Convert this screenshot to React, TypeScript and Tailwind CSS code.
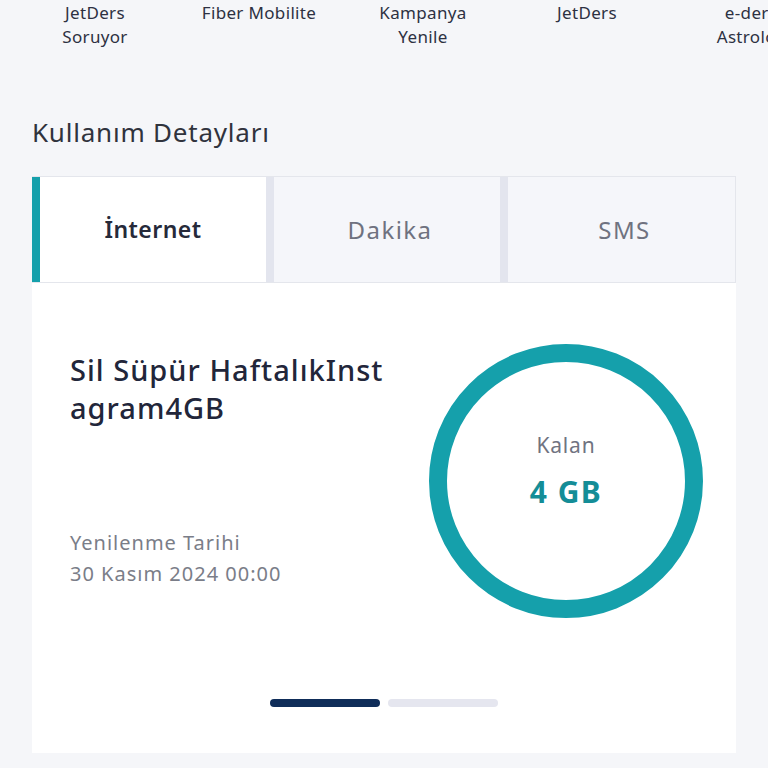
import React from "react";

const shortcuts = [
  ["JetDers", "Soruyor"],
  ["Fiber Mobilite"],
  ["Kampanya", "Yenile"],
  ["JetDers"],
  ["e-ders", "Astroloji"],
];

function Ring() {
  return (
    <div className="relative w-[276px] h-[276px]">
      <svg width="276" height="276" viewBox="0 0 276 276" className="absolute inset-0">
        <circle cx="138" cy="138" r="128" fill="none" stroke="#15a0ab" strokeWidth="18" />
      </svg>
      <div className="absolute inset-0 flex flex-col items-center justify-center pb-[22px]">
        <span className="text-[21px] leading-[24px] tracking-[0.04em] text-[#707381]">Kalan</span>
        <span className="mt-[20px] text-[30px] leading-[30px] font-bold tracking-[0.05em] text-[#148d97]">4 GB</span>
      </div>
    </div>
  );
}

export default function App() {
  return (
    <div
      className="w-[768px] h-[768px] overflow-hidden bg-[#f5f6f9] text-[#262a3a]"
      style={{ fontFamily: '"Noto Sans", "Open Sans", sans-serif' }}
    >
      {/* shortcut labels */}
      <div className="flex pl-[13px] pt-[1px] whitespace-nowrap">
        {shortcuts.map((s, i) => (
          <div
            key={i}
            className="w-[164px] shrink-0 flex flex-col items-center text-[17px] leading-[24px] tracking-[0.02em] text-[#2d3142]"
          >
            {s.map((l) => (
              <span key={l}>{l}</span>
            ))}
          </div>
        ))}
      </div>

      <h2 className="mt-[67px] ml-[32px] text-[26px] leading-[32px] tracking-[0.03em] text-[#30333d]">
        Kullanım Detayları
      </h2>

      <div className="mx-[32px] mt-[28px]">
        {/* tabs */}
        <div className="flex h-[107px] border-t border-b border-r border-[#e4e6ec] bg-[#e3e5ee]">
          <div className="w-[8px] bg-[#15a0ab]" />
          <div className="w-[226px] bg-white flex items-center justify-center text-[23px] font-semibold tracking-[0.02em] text-[#262a3a]">
            İnternet
          </div>
          <div className="w-[8px] bg-[#e3e5ee]" />
          <div className="w-[226px] bg-[#f5f6fa] flex items-center justify-center pl-[6px] text-[24px] tracking-[0.06em] text-[#6f7280]">
            Dakika
          </div>
          <div className="w-[8px] bg-[#e3e5ee]" />
          <div className="flex-1 bg-[#f5f6fa] flex items-center justify-center pl-[6px] text-[24px] tracking-[0.06em] text-[#6f7280]">
            SMS
          </div>
        </div>

        {/* usage card */}
        <div className="bg-white h-[470px] px-[38px] pt-[62px]">
          <div className="flex justify-between">
            <div className="w-[330px] pt-[6px]">
              <div className="text-[29px] leading-[38px] font-medium tracking-[0.035em] text-[#22263a]">
                Sil Süpür HaftalıkInst
                <br />
                agram4GB
              </div>
              <div className="mt-[100px] text-[20px] leading-[31px] tracking-[0.05em] text-[#7a7d88]">
                <div>Yenilenme Tarihi</div>
                <div>30 Kasım 2024 00:00</div>
              </div>
            </div>
            <div className="-mr-[6px] -mt-[2px]">
              <Ring />
            </div>
          </div>
          <div className="mt-[80px] flex justify-center gap-[8px]">
            <div className="w-[110px] h-[8px] rounded-full bg-[#0f2d59]" />
            <div className="w-[110px] h-[8px] rounded-full bg-[#e5e6ef]" />
          </div>
        </div>
      </div>
    </div>
  );
}
